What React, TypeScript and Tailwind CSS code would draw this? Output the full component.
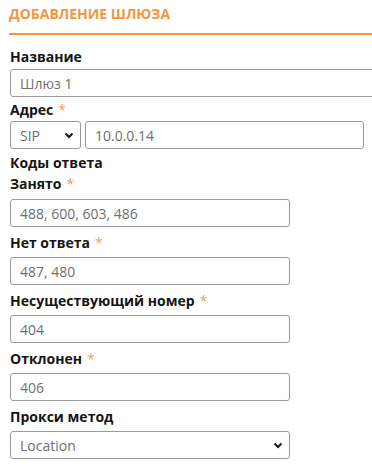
import React from "react";

const Star = () => <span className="ml-[5px] font-normal text-[#f5a05a]">*</span>;

const Chevron = () => (
  <svg width="10" height="7" viewBox="0 0 10 7" className="shrink-0">
    <path d="M1.5 1.5 L5 5 L8.5 1.5" fill="none" stroke="#1a1a1a" strokeWidth="2" />
  </svg>
);

const Label = ({ text, required, className }: { text: string; required?: boolean; className?: string }) => (
  <div className={`h-[20px] text-[14px] leading-[20px] font-bold text-[#151515] ${className ?? ""}`}>
    {text}
    {required && <Star />}
  </div>
);

const Field = ({ value, className }: { value: string; className?: string }) => (
  <div
    className={`flex h-[28px] items-center rounded-[3px] border border-[#9a9a9a] px-[9px] text-[14px] text-[#6f6f6f] ${className ?? ""}`}
  >
    {value}
  </div>
);

const Select = ({ value, className }: { value: string; className?: string }) => (
  <div
    className={`flex h-[28px] items-center justify-between rounded-[3px] border border-[#9a9a9a] pl-[9px] pr-[6px] text-[14px] text-[#6f6f6f] ${className ?? ""}`}
  >
    <span>{value}</span>
    <Chevron />
  </div>
);

const codes = [
  { label: "Нет ответа", value: "487, 480" },
  { label: "Несуществующий номер", value: "404" },
  { label: "Отклонен", value: "406" },
];

export default function App() {
  return (
    <div
      className="h-[469px] w-[372px] overflow-hidden bg-white"
      style={{ fontFamily: '"Open Sans", "Liberation Sans", sans-serif' }}
    >
      <div className="ml-[9px] border-b-2 border-[#f5963c] pt-[4px] pb-[9px]">
        <div className="text-[14px] font-bold leading-[20px] text-[#f5963c]">ДОБАВЛЕНИЕ ШЛЮЗА</div>
      </div>

      <div className="pl-[10px]">
        <Label text="Название" className="mt-[12px]" />
        <Field value="Шлюз 1" className="mt-[2px] w-[400px]" />

        <Label text="Адрес" required className="mt-[3px]" />
        <div className="mt-[1px] flex gap-[4px]">
          <Select value="SIP" className="w-[71px]" />
          <Field value="10.0.0.14" className="w-[279px]" />
        </div>

        <Label text="Коды ответа" className="mt-[4px]" />
        <Label text="Занято" required className="mt-[1px]" />
        <Field value="488, 600, 603, 486" className="mt-[5px] w-[280px]" />

        {codes.map((c) => (
          <div key={c.label}>
            <Label text={c.label} required className="mt-[6px]" />
            <Field value={c.value} className="mt-[4px] w-[280px]" />
          </div>
        ))}

        <Label text="Прокси метод" className="mt-[6px]" />
        <Select value="Location" className="mt-[4px] w-[280px]" />
      </div>
    </div>
  );
}
